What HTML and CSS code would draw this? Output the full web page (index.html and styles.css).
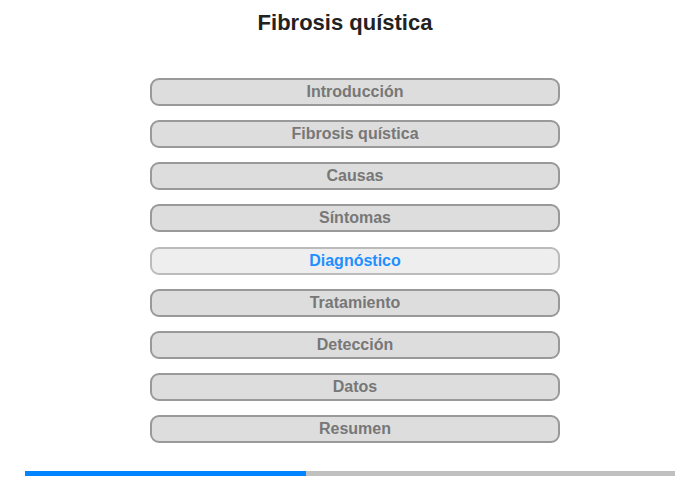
FILE: index.html
```html
<!DOCTYPE html>
<html lang="es">
<head>
<meta charset="utf-8">
<title>Fibrosis quística</title>
<link rel="stylesheet" href="styles.css">
</head>
<body>
<div class="page">
  <h1 class="title">Fibrosis quística</h1>
  <nav class="menu">
    <div class="item">Introducción</div>
    <div class="item">Fibrosis quística</div>
    <div class="item">Causas</div>
    <div class="item">Síntomas</div>
    <div class="item active">Diagnóstico</div>
    <div class="item">Tratamiento</div>
    <div class="item">Detección</div>
    <div class="item">Datos</div>
    <div class="item">Resumen</div>
  </nav>
  <div class="progress"><div class="progress-fill" style="width:43.2%"></div></div>
</div>
</body>
</html>
```
FILE: styles.css
```css
html, body {
  margin: 0;
  padding: 0;
  background: #fff;
}
.page {
  width: 700px;
  height: 480px;
  font-family: "Liberation Sans", Arial, sans-serif;
  display: flex;
  flex-direction: column;
}
.title {
  margin: 0;
  padding: 10px 10px 0 0;
  font-size: 22px;
  line-height: 25px;
  font-weight: bold;
  color: #222;
  text-align: center;
}
.menu {
  margin-top: 43px;
  padding-left: 150px;
  display: flex;
  flex-direction: column;
  gap: 14.16px;
}
.item {
  box-sizing: border-box;
  width: 410px;
  height: 28px;
  border: 2px solid #999;
  border-radius: 9px;
  background: #ddd;
  color: #777;
  font-size: 16px;
  font-weight: bold;
  line-height: 23px;
  text-align: center;
}
.item.active {
  background: #eee;
  border-color: #bbb;
  color: #1e90ff;
}
.progress {
  margin: 28px 0 0 25px;
  width: 650px;
  height: 5px;
  background: #c0c0c0;
}
.progress-fill {
  height: 100%;
  background: #0084ff;
}
```
